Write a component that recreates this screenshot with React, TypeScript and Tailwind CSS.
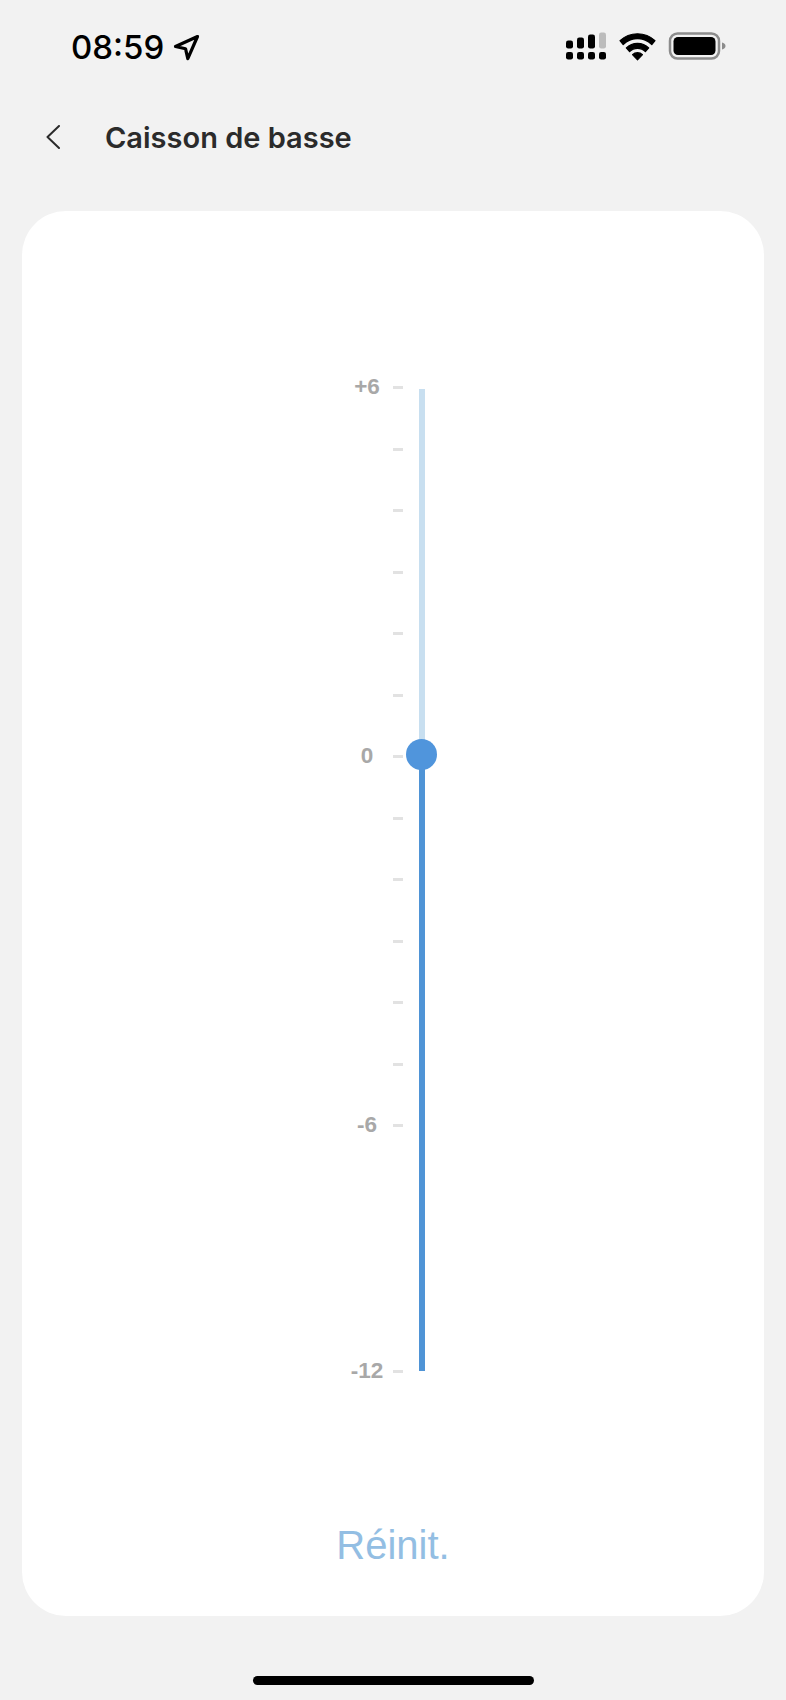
const scale: { label?: string }[] = [
  { label: '+6' },
  {},
  {},
  {},
  {},
  {},
  { label: '0' },
  {},
  {},
  {},
  {},
  {},
  { label: '-6' },
];

function StatusIcons() {
  return (
    <svg width="162" height="30" viewBox="0 0 162 30" className="block">
      {/* signal dots */}
      <g fill="#000">
        <rect x="2" y="8.500" width="7" height="8" rx="2.200" />
        <rect x="13" y="5.500" width="7" height="11" rx="2.200" />
        <rect x="24" y="2.500" width="7" height="14" rx="2.200" />
        <rect x="2" y="20" width="7" height="7.500" rx="2.200" />
        <rect x="13" y="20" width="7" height="7.500" rx="2.200" />
        <rect x="24" y="20" width="7" height="7.500" rx="2.200" />
        <rect x="35" y="20" width="7" height="7.500" rx="2.200" />
      </g>
      <rect x="35" y="0.500" width="7" height="16" rx="2.200" fill="#bcbcbc" />
      {/* wifi */}
      <path
        d="M56 9.200a25.500 25.500 0 0 1 35 0l-3.200 3.800a20.500 20.500 0 0 0-28.600 0Z M62.300 16.400a16 16 0 0 1 22.400 0l-3.300 3.800a11 11 0 0 0-15.800 0Z M68.500 23.200a7.300 7.300 0 0 1 10 0l-5 5.100Z"
        fill="#000"
        stroke="#000"
        strokeWidth="1.200"
        strokeLinejoin="round"
        transform="translate(0 -0.500)"
      />
      {/* battery */}
      <rect x="106" y="1.500" width="49" height="25" rx="7.500" fill="none" stroke="#8c8c8c" strokeWidth="2.500" />
      <rect x="109.500" y="5" width="42" height="18" rx="4.500" fill="#000" />
      <path d="M158 10.500c2 .6 3.500 1.800 3.500 3.500S160 17 158 17.500Z" fill="#8c8c8c" />
    </svg>
  );
}

function ScaleRow({ label }: { label?: string }) {
  return (
    <div className="flex items-center h-[3px]">
      <span className="w-[50px] text-center text-[22.500px] leading-none font-bold text-[#a8a8a8]">{label}</span>
      <span className="ml-px w-[10px] h-[3px] bg-[#e2e2e2]" />
    </div>
  );
}

export default function App() {
  return (
    <div className="w-[786px] h-[1700px] bg-[#f2f2f2] flex flex-col overflow-hidden font-['Inter',sans-serif]">
      <div className="h-[94px] flex items-center justify-between pl-[71px] pr-[60px]">
        <div className="flex items-center gap-[9px]">
          <span className="text-[33px] leading-none font-[550] text-black">08:59</span>
          <svg width="27" height="27" viewBox="0 0 27 27" fill="none">
            <path
              d="M24.500 2.500 2.500 12.500l10 2.200 2.300 10Z"
              stroke="#000"
              strokeWidth="3.200"
              strokeLinejoin="round"
            />
          </svg>
        </div>
        <StatusIcons />
      </div>

      <div className="h-[86px] flex items-center pl-[46px]">
        <svg width="14" height="24" viewBox="0 0 14 24" fill="none">
          <path d="M13 1 1.500 12 13 23" stroke="#2b2b2b" strokeWidth="2" strokeLinecap="round" strokeLinejoin="round" />
        </svg>
        <h1 className="ml-[45px] text-[29px] leading-none font-semibold text-[#2b2b2b]">Caisson de basse</h1>
      </div>

      <div className="mt-[31px] mx-[22px] h-[1405px] bg-white rounded-[44px] flex flex-col">
        <div className="flex pt-[175px] pl-[320px]">
          <div className="flex flex-col font-['Liberation_Sans',sans-serif]">
            <div className="flex flex-col gap-[58.500px]">
              {scale.map((row, i) => (
                <ScaleRow key={i} label={row.label} />
              ))}
            </div>
            <div className="mt-[243px]">
              <ScaleRow label="-12" />
            </div>
          </div>
          <div className="relative ml-[16px] mt-[3px] w-[6px] h-[982px] flex flex-col">
            <div className="h-[366px] bg-[#c8dff0]" />
            <div className="flex-1 bg-[#4f94d6]" />
            <div className="absolute left-[-13.500px] top-[350px] w-[31px] h-[31px] rounded-full bg-[#5095dc]" />
          </div>
        </div>
        <button className="mx-auto mt-[152px] text-[40px] leading-none text-[#93bee3] font-['Liberation_Sans',sans-serif]">
          Réinit.
        </button>
      </div>

      <div className="mt-[60px] mx-auto w-[281px] h-[9px] rounded-full bg-black" />
    </div>
  );
}
